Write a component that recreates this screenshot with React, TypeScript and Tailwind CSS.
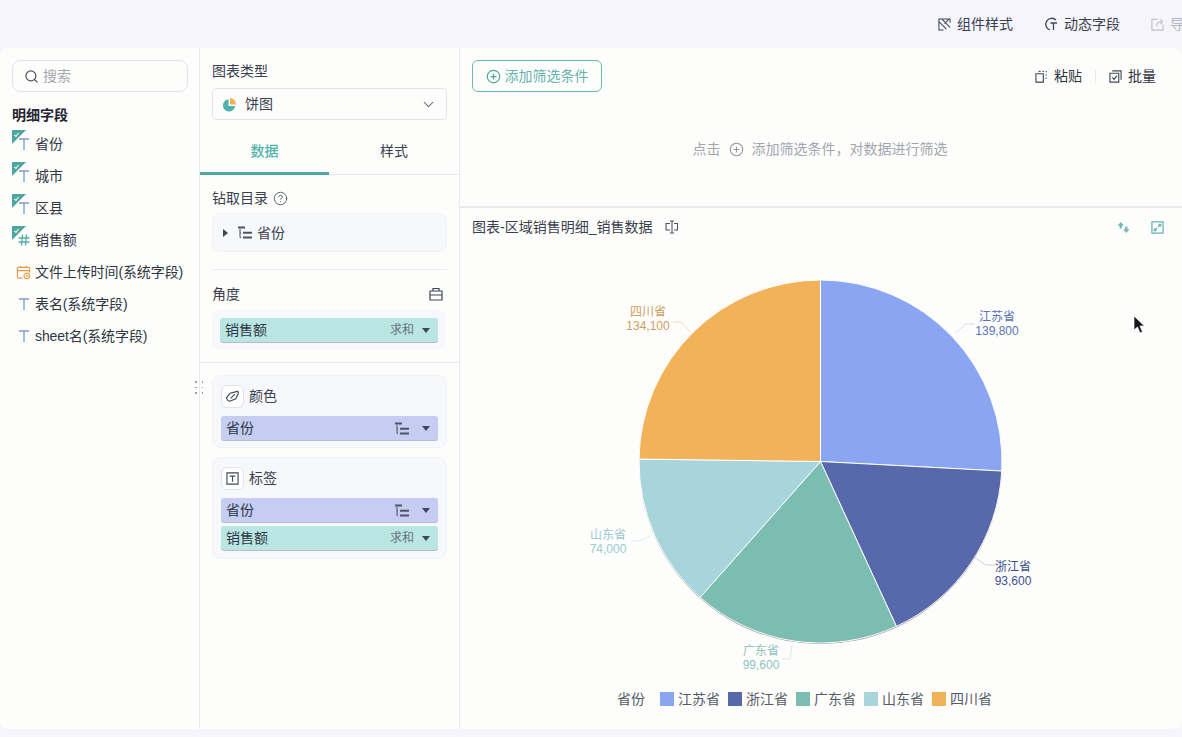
import { Search, ChevronDown, CirclePlus, CircleHelp } from "lucide-react";

const font = { fontFamily: '"Liberation Sans", "Noto Sans CJK SC", sans-serif' };

const slices = [
  { name: "江苏省", value: 139800, color: "#8aa5f2", text: "#5a75b8" },
  { name: "浙江省", value: 93600, color: "#5769aa", text: "#3f4f8f" },
  { name: "广东省", value: 99600, color: "#7cbdb2", text: "#86bcb6" },
  { name: "山东省", value: 74000, color: "#a8d5dc", text: "#93c4cc" },
  { name: "四川省", value: 134100, color: "#f1b25a", text: "#cf9f63" },
];

const cx = 360.5;
const cy = 213.5;
const r = 181.5;

function pieSlices() {
  const total = slices.reduce((sum, s) => sum + s.value, 0);
  let start = 0;
  return slices.map((s) => {
    const end = start + (s.value / total) * Math.PI * 2;
    const x1 = cx + r * Math.sin(start);
    const y1 = cy - r * Math.cos(start);
    const x2 = cx + r * Math.sin(end);
    const y2 = cy - r * Math.cos(end);
    const large = end - start > Math.PI ? 1 : 0;
    const d = `M${cx} ${cy}L${x1} ${y1}A${r} ${r} 0 ${large} 1 ${x2} ${y2}Z`;
    start = end;
    return { ...s, d };
  });
}

const labels = [
  { name: "江苏省", value: "139,800", x: 537, y: 73, fill: "#5a75b8", line: "M495 85L506 76H515", stroke: "#d9e2f2" },
  { name: "浙江省", value: "93,600", x: 553, y: 322.5, fill: "#3f4f8f", line: "M514 309L526 317H535", stroke: "#cfd3de" },
  { name: "广东省", value: "99,600", x: 301, y: 407, fill: "#8fc4be", line: "M332 397L330 411H322", stroke: "#d8ecea" },
  { name: "山东省", value: "74,000", x: 148, y: 290.5, fill: "#9ccbd2", line: "M190 288L179 293H171", stroke: "#e0eef0" },
  { name: "四川省", value: "134,100", x: 188, y: 68, fill: "#cf9f63", line: "M230 84L221 74H213", stroke: "#f3dfc4" },
];

function Flag() {
  return (
    <svg viewBox="0 0 14 14" className="absolute left-0 top-0 h-[14px] w-[14px]">
      <path d="M0 0H14L0 14Z" fill="#4fa79c" />
      <path d="M2.500 5L4 6.500L6.500 3" fill="none" stroke="#fff" strokeWidth="1.1" />
    </svg>
  );
}

function TextGlyph() {
  return (
    <svg viewBox="0 0 10 12" className="h-3 w-[10px]" fill="none" stroke="#7f9ac6" strokeWidth="1.3">
      <path d="M0 1H10M5 1V12" />
    </svg>
  );
}

function HashGlyph() {
  return (
    <svg viewBox="0 0 12 12" className="h-3 w-3" fill="none" stroke="#55b0a6" strokeWidth="1.3">
      <path d="M4.500 0.500L3.500 11.500M8.500 0.500L7.500 11.500M0.500 4H11.500M0.500 8H11.500" />
    </svg>
  );
}

function CalendarGlyph() {
  return (
    <svg viewBox="0 0 16 16" className="h-[15px] w-[15px]" fill="none" stroke="#e39a4b" strokeWidth="1.2">
      <path d="M7 14H2.500A1 1 0 0 1 1.500 13V3.500A1 1 0 0 1 2.500 2.500H13.500A1 1 0 0 1 14.500 3.500V8M1.500 6H14.500M5 1V3M11 1V3" />
      <circle cx="11.500" cy="11.500" r="3" />
      <path d="M11.500 10V11.700H13" />
    </svg>
  );
}

function TreeGlyph({ color = "#4b5563" }: { color?: string }) {
  return (
    <svg viewBox="0 0 14 13" className="h-[13px] w-[14px]" fill="none" stroke={color}>
      <path d="M0 1.500H7" strokeWidth="2" />
      <path d="M2 3V11.500H3M2 7H3" strokeWidth="1" />
      <path d="M5 6.800H14M5 11.500H14" strokeWidth="2" />
    </svg>
  );
}

function Caret() {
  return <span className="h-0 w-0 border-x-[4.500px] border-t-[5px] border-x-transparent border-t-[#3f4757]" />;
}

function FieldRow({ label, kind, flagged }: { label: string; kind: "text" | "hash" | "date"; flagged?: boolean }) {
  return (
    <div className="flex h-8 items-center text-sm text-[#2f3542]">
      <span className="relative flex h-8 w-[23px] shrink-0 items-center justify-center">
        {flagged && (
          <span className="absolute left-0 top-[2px] h-[14px] w-[14px]">
            <Flag />
          </span>
        )}
        {kind === "text" && <TextGlyph />}
        {kind === "hash" && <HashGlyph />}
        {kind === "date" && <CalendarGlyph />}
      </span>
      <span className="whitespace-nowrap tracking-[-0.1px]">{label}</span>
    </div>
  );
}

function Chip({ label, tone, sum }: { label: string; tone: "blue" | "green"; sum?: boolean }) {
  return (
    <div
      className={`flex h-6 items-center justify-between rounded-[3px] pl-[5px] pr-[8px] text-sm text-[#2f3542] shadow-[0_1px_0_#b9bcc8] ${
        tone === "blue" ? "bg-[#c5cdf3]" : "bg-[#b9e6e2]"
      }`}
    >
      <span>{label}</span>
      <span className="flex items-center gap-[7px]">
        {sum ? <span className="mr-[1px] text-xs text-[#6b7280]">求和</span> : <span className="mr-[6px] flex"><TreeGlyph /></span>}
        <Caret />
      </span>
    </div>
  );
}

function Sidebar() {
  return (
    <aside className="flex w-[200px] shrink-0 flex-col border-r border-[#e9eaf0] px-3 pt-3">
      <div className="flex h-[32px] w-[176px] items-center gap-[4px] rounded-lg border border-[#dfe3ec] pl-[11px] text-sm text-[#a4a8b1]">
        <Search size={15} color="#4b5563" />
        <span>搜索</span>
      </div>
      <div className="mt-[13px] text-sm leading-5 font-bold text-[#1f2430]">明细字段</div>
      <div className="mt-[3px] flex flex-col">
        <FieldRow label="省份" kind="text" flagged />
        <FieldRow label="城市" kind="text" flagged />
        <FieldRow label="区县" kind="text" flagged />
        <FieldRow label="销售额" kind="hash" flagged />
        <FieldRow label="文件上传时间(系统字段)" kind="date" />
        <FieldRow label="表名(系统字段)" kind="text" />
        <FieldRow label="sheet名(系统字段)" kind="text" />
      </div>
    </aside>
  );
}

function ConfigPanel() {
  return (
    <section className="relative flex w-[260px] shrink-0 flex-col border-r border-[#e9eaf0] text-sm text-[#3a404d]">
      <div className="px-3 pt-[13px]">
        <div className="leading-5">图表类型</div>
        <div className="mt-[7px] flex h-8 items-center rounded-[4px] border border-[#e2e4ea] pl-[9px] pr-[9px]">
          <svg viewBox="0 0 16 16" className="h-[15px] w-[15px]">
            <path d="M7 2.500A6.500 6.500 0 1 0 14 9.500H7Z" fill="#4fb3a8" />
            <path d="M8.500 1A6.500 6.500 0 0 1 15 8H8.500Z" fill="#f1b25a" />
          </svg>
          <span className="ml-[8px] flex-1">饼图</span>
          <ChevronDown size={17} color="#6b7280" strokeWidth={1.5} />
        </div>
      </div>
      <div className="mt-[10px] flex h-[45px] border-b border-[#e6e8ee]">
        <div className="-mb-px flex w-[129px] items-center justify-center border-b-[3px] border-[#4fa99e] font-medium text-[#4fb3a8]">数据</div>
        <div className="flex flex-1 items-center justify-center pb-[2px]">样式</div>
      </div>
      <div className="px-3">
        <div className="mt-[13px] flex items-center gap-[5px] leading-5">
          钻取目录
          <CircleHelp size={15} strokeWidth={1.4} color="#4b5563" />
        </div>
        <div className="mt-[5px] flex h-[39px] items-center rounded-lg border border-[#f0f2f7] bg-[#f6f8fc] pl-[10px]">
          <span className="h-0 w-0 border-y-[4px] border-l-[5px] border-y-transparent border-l-[#3f4757]" />
          <span className="ml-[10px] flex"><TreeGlyph /></span>
          <span className="ml-[5px]">省份</span>
        </div>
        <div className="mt-[17px] h-px bg-[#e9eaf0]" />
        <div className="mt-[14px] flex items-center justify-between pr-[4px] leading-5">
          角度
          <svg viewBox="0 0 14 14" className="h-[14px] w-[14px]" fill="none" stroke="#3f4757" strokeWidth="1.2">
            <path d="M1 4H13V13H1ZM4 4V1.500H10V4M1 8H13" />
          </svg>
        </div>
        <div className="mt-[6px] w-[234px] rounded-lg bg-[#f6f8fc] px-2 py-2">
          <Chip label="销售额" tone="green" sum />
        </div>
      </div>
      <div className="mt-3 h-px bg-[#e6e8ee]" />
      <div className="flex flex-col gap-[9px] px-3 pt-3">
        <div className="rounded-lg border border-[#f2f3f8] bg-[#f7f8fc] px-2 pb-[7px] pt-[9px]">
          <div className="flex items-center gap-[5px] leading-[21px]">
            <span className="flex h-[23px] w-[23px] items-center justify-center rounded-md border border-[#e2e4ea] bg-white">
              <svg viewBox="0 0 16 16" className="h-[15px] w-[15px]" fill="none" stroke="#3f4757" strokeWidth="1.2">
                <path d="M1.500 9.500L5.500 4.500L13 2.500C14 2.500 14.500 3.500 14.200 4.500L11.500 10.500L5 13C3.500 13 2 11 1.500 9.500Z" />
                <path d="M6 10L10.500 5.500" />
              </svg>
            </span>
            颜色
          </div>
          <div className="mt-[8px]">
            <Chip label="省份" tone="blue" />
          </div>
        </div>
        <div className="rounded-lg border border-[#f2f3f8] bg-[#f7f8fc] px-2 pb-2 pt-[9px]">
          <div className="flex items-center gap-[5px] leading-[21px]">
            <span className="flex h-[23px] w-[23px] items-center justify-center rounded-md border border-[#e2e4ea] bg-white">
              <svg viewBox="0 0 14 14" className="h-[13px] w-[13px]" fill="none" stroke="#3f4757" strokeWidth="1.2">
                <path d="M1 1H13V13H1ZM4 4.500H10M7 4.500V10.500" />
              </svg>
            </span>
            标签
          </div>
          <div className="mt-[8px] flex flex-col gap-1">
            <Chip label="省份" tone="blue" />
            <Chip label="销售额" tone="green" sum />
          </div>
        </div>
      </div>
      <div className="absolute -left-[5px] top-[333px] grid grid-cols-2 gap-x-[5px] gap-y-[4px]">
        {[0, 1, 2, 3, 4, 5].map((i) => (
          <span key={i} className="h-[1.500px] w-[1.500px] bg-[#9aa0ab]" />
        ))}
      </div>
    </section>
  );
}

function FilterArea() {
  return (
    <div className="h-[160px] shrink-0 border-b-2 border-[#e9eaf0] px-3 pt-3">
      <div className="flex items-center justify-between">
        <div className="flex h-8 w-[130px] items-center justify-center gap-[4px] rounded-md border border-[#6fb5b0] text-sm text-[#67b3ad]">
          <CirclePlus size={15} strokeWidth={2} color="#4fa99e" />
          添加筛选条件
        </div>
        <div className="flex items-center pr-[14px] text-sm text-[#2f3542]">
          <span className="flex items-center gap-[6px]">
            <svg viewBox="0 0 14 14" className="h-[13px] w-[13px]" fill="none" stroke="#3f4757" strokeWidth="1.2">
              <path d="M1 4H9V13H1ZM4 1.500H6M8 1.500H9.500M12 1V2.500M12 4.500V6M12 8V9.500" />
            </svg>
            粘贴
          </span>
          <span className="mx-[13px] h-[13px] w-px bg-[#e6e8ee]" />
          <span className="flex items-center gap-[6px]">
            <svg viewBox="0 0 14 14" className="h-[13px] w-[13px]" fill="none" stroke="#3f4757" strokeWidth="1.2">
              <path d="M1 3.500H10.500V13H1ZM3.500 1H13V10.500M3.500 8L5.500 10L8.500 6" />
            </svg>
            批量
          </span>
        </div>
      </div>
      <div className="mt-[47px] flex items-center justify-center gap-2 pr-[2px] text-sm text-[#a2a6ae]">
        <span>点击</span>
        <CirclePlus size={15} strokeWidth={1.7} color="#8f949d" />
        <span>添加筛选条件，对数据进行筛选</span>
      </div>
    </div>
  );
}

function PieChart() {
  return (
    <svg viewBox="0 0 722 432" className="h-[432px] w-[722px] shrink-0">
      <ellipse cx={cx} cy={cy + 1} rx={r} ry={r} fill="#8f8f94" />
      {pieSlices().map((s) => (
        <path key={s.name} d={s.d} fill={s.color} stroke="#fff" strokeWidth="1" strokeLinejoin="round" />
      ))}
      {labels.map((l) => (
        <g key={l.name}>
          <path d={l.line} fill="none" stroke={l.stroke} />
          <text x={l.x} y={l.y} fontSize="12" fill={l.fill} textAnchor="middle">{l.name}</text>
          <text x={l.x} y={l.y + 14} fontSize="12" fill={l.fill} textAnchor="middle">{l.value}</text>
        </g>
      ))}
    </svg>
  );
}

function ChartArea() {
  return (
    <div className="flex min-h-0 flex-1 flex-col">
      <div className="flex h-[38px] shrink-0 items-center justify-between px-3 pr-[18px] text-sm text-[#3a404d]">
        <span className="flex items-center gap-[13px]">
          图表-区域销售明细_销售数据
          <svg viewBox="0 0 14 14" className="h-[14px] w-[14px]" fill="none" stroke="#4b5563" strokeWidth="1.1">
            <path d="M5 3.500H1V10H5M9 3.500H12.500V10H9M5 1H9M7 1V13M5 13H9" />
          </svg>
        </span>
        <span className="flex items-center gap-[21px]">
          <svg viewBox="0 0 14 14" className="h-[13px] w-[13px]" fill="#6fb9b2">
            <path d="M4 1L7.500 5H5.200V8H2.800V5H0.500Z" />
            <path d="M10 13L6.500 9H8.800V6H11.200V9H13.500Z" />
          </svg>
          <svg viewBox="0 0 14 14" className="h-[13px] w-[13px]" fill="none" stroke="#5fb3ac" strokeWidth="1.3">
            <path d="M1 1H13V13H1ZM8 3.500H10.500V6M10.500 3.500L7.500 6.500M6 10.500H3.500V8M3.500 10.500L6.500 7.500" />
          </svg>
        </span>
      </div>
      <div className="mt-[2px]">
        <PieChart />
      </div>
      <div className="flex h-[38px] items-center pl-[157px] text-sm text-[#555b66]">
        <span className="mr-[15px]">省份</span>
        <div className="flex gap-[8px]">
          {slices.map((s) => (
            <span key={s.name} className="flex items-center gap-1">
              <span className="h-[14px] w-[14px]" style={{ backgroundColor: s.color }} />
              {s.name}
            </span>
          ))}
        </div>
      </div>
    </div>
  );
}

export default function App() {
  return (
    <div className="relative flex h-[737px] w-[1182px] flex-col overflow-hidden bg-[#f5f5fb]" style={font}>
      <header className="flex h-[48px] shrink-0 items-center justify-end gap-[31px] overflow-hidden whitespace-nowrap text-sm text-[#3a404d]">
        <span className="flex items-center gap-[6px]">
          <svg viewBox="0 0 14 14" className="h-[13px] w-[13px]" fill="none" stroke="#3f4757" strokeWidth="1.1">
            <path d="M13 5V1H1V13H6M1 4L9 12M4 1L13 10M7 6L12 1" />
          </svg>
          组件样式
        </span>
        <span className="flex items-center gap-[6px]">
          <svg viewBox="0 0 14 14" className="h-[14px] w-[14px]" fill="none" stroke="#3f4757" strokeWidth="1.3">
            <path d="M12 3A6 6 0 1 0 6 13M6.500 6H13M9.500 6V13" />
          </svg>
          动态字段
        </span>
        <span className="-mr-[16px] flex shrink-0 items-center gap-[6px] text-[#b4b7be]">
          <svg viewBox="0 0 14 14" className="h-[13px] w-[13px] shrink-0" fill="none" stroke="#c0c3c9" strokeWidth="1.2">
            <path d="M7 1.500H1V13H13V7M6 9C6 5 8 4 12 4M10 1.500L12.500 4L10 6.500" />
          </svg>
          导出
        </span>
      </header>
      <main className="flex h-[681px] shrink-0 overflow-hidden rounded-lg bg-[#fdfdfc]">
        <Sidebar />
        <ConfigPanel />
        <div className="flex min-w-0 flex-1 flex-col">
          <FilterArea />
          <ChartArea />
        </div>
      </main>
      <svg viewBox="0 0 12 18" className="absolute left-[1133px] top-[316px] h-[18px] w-[12px]">
        <path d="M1 0V14L4.500 11L7 17L9.500 16L7 10H11.500Z" fill="#15181f" stroke="#fff" strokeWidth="0.7" />
      </svg>
    </div>
  );
}
